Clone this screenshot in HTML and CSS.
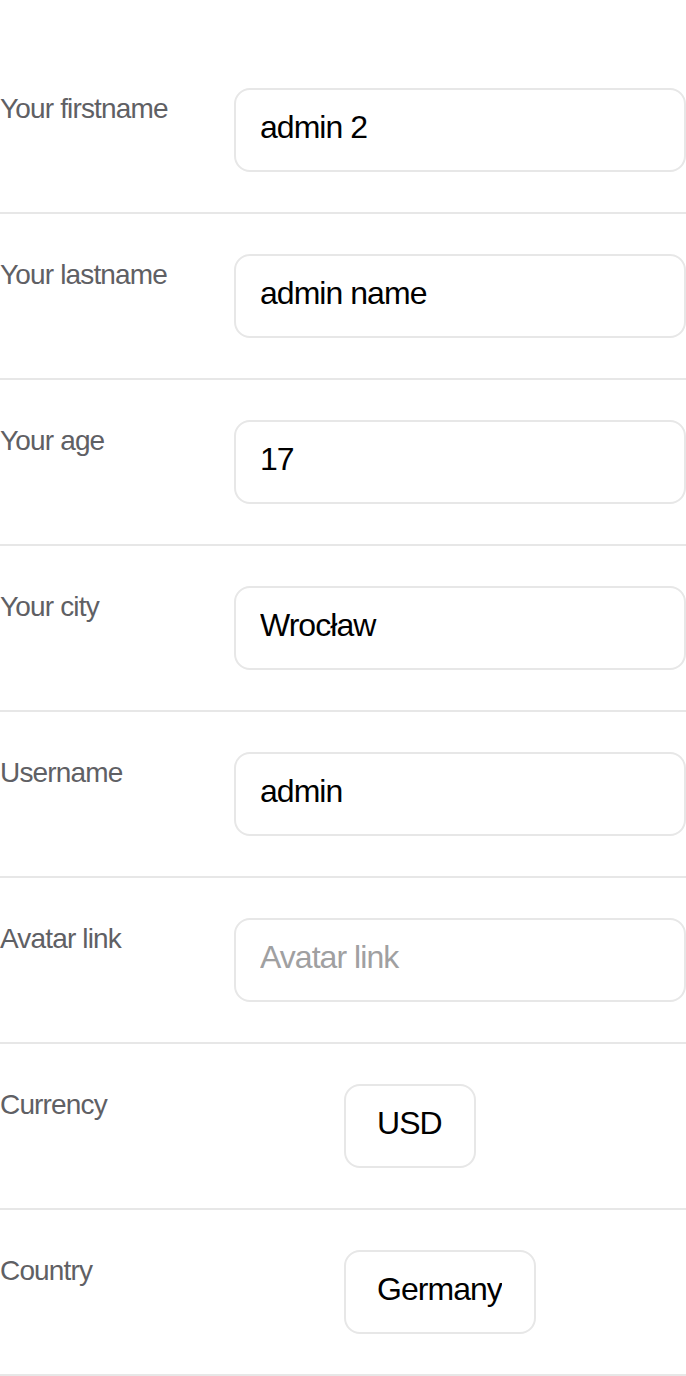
FILE: index.html
```html
<!DOCTYPE html>
<html lang="en">
<head>
<meta charset="utf-8">
<title>Profile settings</title>
<link rel="stylesheet" href="styles.css">
</head>
<body>
<form class="settings">
  <div class="row"><label class="label" for="firstname">Your firstname</label><input class="field" id="firstname" type="text" value="admin 2"></div>
  <div class="row"><label class="label" for="lastname">Your lastname</label><input class="field" id="lastname" type="text" value="admin name"></div>
  <div class="row"><label class="label" for="age">Your age</label><input class="field" id="age" type="text" value="17"></div>
  <div class="row"><label class="label" for="city">Your city</label><input class="field" id="city" type="text" value="Wrocław"></div>
  <div class="row"><label class="label" for="username">Username</label><input class="field" id="username" type="text" value="admin"></div>
  <div class="row"><label class="label" for="avatar">Avatar link</label><input class="field" id="avatar" type="text" placeholder="Avatar link"></div>
  <div class="row row-select"><label class="label" for="currency">Currency</label><select class="field select" id="currency"><option>USD</option></select></div>
  <div class="row row-select"><label class="label" for="country">Country</label><select class="field select" id="country"><option>Germany</option></select></div>
</form>
</body>
</html>
```
FILE: styles.css
```css
* {
  box-sizing: border-box;
}

body {
  margin: 0;
  background: #fff;
  color: #000;
  font-family: "Liberation Sans", Arial, sans-serif;
}

.settings {
  padding-top: 48px;
}

.row {
  display: grid;
  grid-template-columns: 234px 1fr;
  align-items: start;
  padding: 40px 0;
  border-bottom: 2px solid #e7e7e7;
}

.row-select {
  grid-template-columns: 344px 1fr;
}

.label {
  padding-top: 4px;
  color: #5f6064;
  font-size: 28px;
  line-height: 34px;
  letter-spacing: -0.03em;
}

.field {
  width: 100%;
  height: 84px;
  padding: 0 24px 6px;
  border: 2px solid #e7e7e7;
  border-radius: 16px;
  background: #fff;
  color: #000;
  font: inherit;
  font-size: 32px;
  letter-spacing: -0.03em;
}

.field::placeholder {
  color: #a0a0a1;
}

.select {
  appearance: none;
  justify-self: start;
  width: auto;
  padding: 0 32px 6px 31px;
  overflow: visible;
}
```
